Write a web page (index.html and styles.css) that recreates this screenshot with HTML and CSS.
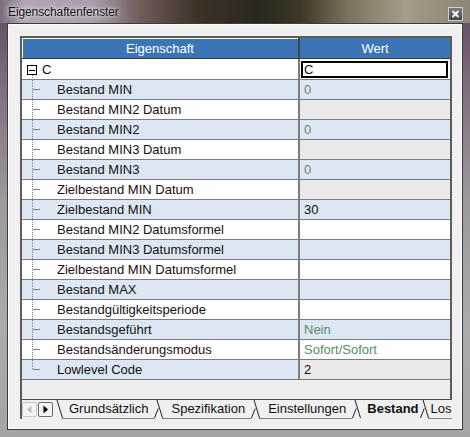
FILE: index.html
```html
<!DOCTYPE html>
<html lang="de">
<head>
<meta charset="utf-8">
<title>Eigenschaftenfenster</title>
<link rel="stylesheet" href="styles.css">
</head>
<body>
<div class="window">
  <div class="titlebar">
    <span class="title">Eigenschaftenfenster</span>
    <span class="close"><svg width="9" height="8" viewBox="0 0 9 8"><path d="M1.5 1 L7.5 7 M7.5 1 L1.5 7" stroke="#fff" stroke-width="1.8"/></svg></span>
  </div>
  <div class="client">
    <div class="panel">
      <div class="grid">
        <div class="header">
          <div class="hcell first">Eigenschaft</div>
          <div class="hcell">Wert</div>
        </div>

        <div class="row top">
          <div class="name"><svg class="tree-root" width="20" height="20" viewBox="0 0 20 20"><rect x="5.5" y="6.5" width="9" height="9" fill="#fff" stroke="#000"/><path d="M7 11 H13" stroke="#000"/><path d="M10.5 16 V20" stroke="#808080" stroke-dasharray="1 1"/></svg>C</div>
          <div class="val edit"><span class="box">C</span></div>
        </div>

        <div class="row alt">
          <div class="name"><svg class="tree" width="35" height="19" viewBox="0 0 35 19"><path d="M10.5 0 V19" stroke="#808080" stroke-dasharray="1 1"/><path d="M11 9.5 H18" stroke="#808080"/></svg>Bestand MIN</div>
          <div class="val green">0</div>
        </div>
        <div class="row">
          <div class="name"><svg class="tree" width="35" height="19" viewBox="0 0 35 19"><path d="M10.5 0 V19" stroke="#808080" stroke-dasharray="1 1"/><path d="M11 9.5 H18" stroke="#808080"/></svg>Bestand MIN2 Datum</div>
          <div class="val ro"></div>
        </div>
        <div class="row alt">
          <div class="name"><svg class="tree" width="35" height="19" viewBox="0 0 35 19"><path d="M10.5 0 V19" stroke="#808080" stroke-dasharray="1 1"/><path d="M11 9.5 H18" stroke="#808080"/></svg>Bestand MIN2</div>
          <div class="val green">0</div>
        </div>
        <div class="row">
          <div class="name"><svg class="tree" width="35" height="19" viewBox="0 0 35 19"><path d="M10.5 0 V19" stroke="#808080" stroke-dasharray="1 1"/><path d="M11 9.5 H18" stroke="#808080"/></svg>Bestand MIN3 Datum</div>
          <div class="val ro"></div>
        </div>
        <div class="row alt">
          <div class="name"><svg class="tree" width="35" height="19" viewBox="0 0 35 19"><path d="M10.5 0 V19" stroke="#808080" stroke-dasharray="1 1"/><path d="M11 9.5 H18" stroke="#808080"/></svg>Bestand MIN3</div>
          <div class="val green">0</div>
        </div>
        <div class="row">
          <div class="name"><svg class="tree" width="35" height="19" viewBox="0 0 35 19"><path d="M10.5 0 V19" stroke="#808080" stroke-dasharray="1 1"/><path d="M11 9.5 H18" stroke="#808080"/></svg>Zielbestand MIN Datum</div>
          <div class="val ro"></div>
        </div>
        <div class="row alt">
          <div class="name"><svg class="tree" width="35" height="19" viewBox="0 0 35 19"><path d="M10.5 0 V19" stroke="#808080" stroke-dasharray="1 1"/><path d="M11 9.5 H18" stroke="#808080"/></svg>Zielbestand MIN</div>
          <div class="val">30</div>
        </div>
        <div class="row">
          <div class="name"><svg class="tree" width="35" height="19" viewBox="0 0 35 19"><path d="M10.5 0 V19" stroke="#808080" stroke-dasharray="1 1"/><path d="M11 9.5 H18" stroke="#808080"/></svg>Bestand MIN2 Datumsformel</div>
          <div class="val"></div>
        </div>
        <div class="row alt">
          <div class="name"><svg class="tree" width="35" height="19" viewBox="0 0 35 19"><path d="M10.5 0 V19" stroke="#808080" stroke-dasharray="1 1"/><path d="M11 9.5 H18" stroke="#808080"/></svg>Bestand MIN3 Datumsformel</div>
          <div class="val"></div>
        </div>
        <div class="row">
          <div class="name"><svg class="tree" width="35" height="19" viewBox="0 0 35 19"><path d="M10.5 0 V19" stroke="#808080" stroke-dasharray="1 1"/><path d="M11 9.5 H18" stroke="#808080"/></svg>Zielbestand MIN Datumsformel</div>
          <div class="val"></div>
        </div>
        <div class="row alt">
          <div class="name"><svg class="tree" width="35" height="19" viewBox="0 0 35 19"><path d="M10.5 0 V19" stroke="#808080" stroke-dasharray="1 1"/><path d="M11 9.5 H18" stroke="#808080"/></svg>Bestand MAX</div>
          <div class="val"></div>
        </div>
        <div class="row">
          <div class="name"><svg class="tree" width="35" height="19" viewBox="0 0 35 19"><path d="M10.5 0 V19" stroke="#808080" stroke-dasharray="1 1"/><path d="M11 9.5 H18" stroke="#808080"/></svg>Bestandgültigkeitsperiode</div>
          <div class="val"></div>
        </div>
        <div class="row alt">
          <div class="name"><svg class="tree" width="35" height="19" viewBox="0 0 35 19"><path d="M10.5 0 V19" stroke="#808080" stroke-dasharray="1 1"/><path d="M11 9.5 H18" stroke="#808080"/></svg>Bestandsgeführt</div>
          <div class="val green">Nein</div>
        </div>
        <div class="row">
          <div class="name"><svg class="tree" width="35" height="19" viewBox="0 0 35 19"><path d="M10.5 0 V19" stroke="#808080" stroke-dasharray="1 1"/><path d="M11 9.5 H18" stroke="#808080"/></svg>Bestandsänderungsmodus</div>
          <div class="val green">Sofort/Sofort</div>
        </div>
        <div class="row alt">
          <div class="name"><svg class="tree" width="35" height="19" viewBox="0 0 35 19"><path d="M10.5 0 V10" stroke="#808080" stroke-dasharray="1 1"/><path d="M11 9.5 H18" stroke="#808080"/></svg>Lowlevel Code</div>
          <div class="val ro">2</div>
        </div>

        <div class="filler"></div>
      </div>

      <div class="tabs">
        <span class="sbtn off"><svg width="13" height="13" viewBox="0 0 13 13"><path d="M8.5 2.5 L4 6.5 L8.5 10.5 Z" fill="#c4c4c4"/></svg></span>
        <span class="sbtn on"><svg width="13" height="13" viewBox="0 0 13 13"><path d="M4.5 2.5 L9 6.5 L4.5 10.5 Z" fill="#000"/></svg></span>
        <svg class="sep" width="10" height="19" viewBox="0 0 10 19"><path d="M4 0 L9.5 18" stroke="#222" fill="none"/><path d="M9 18.5 H10" stroke="#808080"/></svg>
        <span class="tab">Grundsätzlich</span>
        <svg class="sep" width="14" height="19" viewBox="0 0 14 19"><path d="M6 0 L11.5 18" stroke="#222" fill="none"/><path d="M3.5 18 L7.2 8.5" stroke="#222" fill="none"/><path d="M0 18.5 H3.5 M11 18.5 H14" stroke="#808080"/></svg>
        <span class="tab">Spezifikation</span>
        <svg class="sep" width="14" height="19" viewBox="0 0 14 19"><path d="M6 0 L11.5 18" stroke="#222" fill="none"/><path d="M3.5 18 L7.2 8.5" stroke="#222" fill="none"/><path d="M0 18.5 H3.5 M11 18.5 H14" stroke="#808080"/></svg>
        <span class="tab">Einstellungen</span>
        <svg class="sep" width="14" height="19" viewBox="0 0 14 19"><path d="M6 0 L11.5 18" stroke="#222" fill="none"/><path d="M3.5 18 L7.2 8.5" stroke="#222" fill="none"/><path d="M0 18.5 H3.5" stroke="#808080"/></svg>
        <span class="tab active">Bestand</span>
        <svg class="sep last-sep" width="12" height="19" viewBox="0 0 12 19"><path d="M4 0 L9.5 18" stroke="#222" fill="none"/><path d="M1.5 18 L5.2 8.5" stroke="#222" fill="none"/><path d="M9 18.5 H12" stroke="#808080"/></svg>
        <span class="tab last">Los</span>
      </div>
    </div>
  </div>
</div>
</body>
</html>
```
FILE: styles.css
```css
html, body {
  margin: 0;
  padding: 0;
}
body {
  width: 470px;
  height: 437px;
  overflow: hidden;
  font-family: "Liberation Sans", Arial, sans-serif;
}
.window {
  height: 437px;
  display: flex;
  flex-direction: column;
  background: linear-gradient(180deg, #5e4a5e 0%, #7d6c7c 18%, #9c989c 45%, #ababab 75%, #a4a4a4 100%);
}
.titlebar {
  height: 23px;
  flex: 0 0 23px;
  display: flex;
  align-items: flex-start;
  background: linear-gradient(90deg, #7a6a7e 0%, #b2a4b4 5%, #aa9cab 20%, #6e5c5a 30%, #3c3326 42%, #2b271d 55%, #3e3726 64%, #7c735e 74%, #a49c88 86%, #8c8474 100%);
}
.title {
  margin: 5px 0 0 8px;
  font-size: 12px;
  letter-spacing: -0.1px;
  color: #141414;
  text-shadow: 0 0 6px rgba(255,255,255,0.85), 0 0 3px rgba(255,255,255,0.7);
}
.close {
  margin: 7px 7px 0 auto;
  width: 15px;
  height: 14px;
  box-sizing: border-box;
  border: 1px solid #cfcfcf;
  background: linear-gradient(180deg, #7a7a7a, #474747);
  display: flex;
  align-items: center;
  justify-content: center;
}
.client {
  margin: 0 7px;
  height: 407px;
  box-sizing: border-box;
  border: 1px solid #3c3c3c;
  box-shadow: inset 0 0 0 1px #fdfdfd;
  background: #f0f0f0;
  padding: 12px 10px 10px 12px;
}
.panel {
  border-left: 2px solid #5c5c5c;
  display: flex;
  flex-direction: column;
}
.grid {
  border-top: 2px solid #5c5c5c;
  border-right: 2px solid #5c5c5c;
  border-bottom: 1px solid #4a4a4a;
  background: #ededed;
}
.header {
  display: grid;
  grid-template-columns: 278px 150px;
  height: 21px;
  box-sizing: border-box;
  border-bottom: 1px solid #3a3a3a;
}
.hcell {
  background: #3b75b6;
  color: #fff;
  font-size: 13px;
  display: flex;
  align-items: center;
  justify-content: center;
}
.hcell.first {
  border-right: 2px solid #454545;
  box-shadow: inset 1px 1px 0 #ffffff;
}
.row {
  display: grid;
  grid-template-columns: 278px 150px;
  height: 20px;
  box-sizing: border-box;
  border-bottom: 1px solid #7c7c7c;
  font-size: 13px;
  color: #111;
}
.row.top {
  height: 21px;
}
.name {
  display: flex;
  align-items: center;
  border-right: 2px solid #7c7c7c;
  background: #fff;
  white-space: nowrap;
}
.tree, .tree-root {
  flex: 0 0 auto;
  display: block;
  align-self: stretch;
  shape-rendering: crispEdges;
}
.val {
  display: flex;
  align-items: center;
  padding-left: 4px;
  background: #fff;
}
.row.alt .name,
.row.alt .val {
  background: #dce7f3;
}
.row .val.ro {
  background: #e9e9e9;
}
.val.green {
  color: #5a8b6a;
}
.val.edit {
  padding: 2px 2px 1px 1px;
  align-items: stretch;
}
.box {
  flex: 1;
  border: 2px solid #000;
  background: #fff;
  padding-left: 1px;
  display: flex;
  align-items: center;
  line-height: 13px;
}
.filler {
  height: 19px;
}
.tabs {
  height: 19px;
  display: flex;
  align-items: flex-start;
  overflow: hidden;
  font-size: 13px;
  color: #111;
  white-space: nowrap;
}
.sbtn {
  flex: 0 0 auto;
  width: 15px;
  height: 15px;
  margin-top: 2px;
  box-sizing: border-box;
  border: 1px solid #c8c8c8;
  border-radius: 2px;
  background: #f4f4f4;
  display: flex;
  align-items: center;
  justify-content: center;
}
.sbtn.on {
  margin-left: 1px;
  border-color: #6a6a6a;
}
.sep {
  flex: 0 0 auto;
  display: block;
}
.tab {
  flex: 0 0 auto;
  height: 19px;
  box-sizing: border-box;
  line-height: 18px;
  padding: 0 3px 0 6px;
  border-bottom: 1px solid #808080;
}
.tab.active {
  font-weight: bold;
  padding: 0 0 0 4px;
  border-bottom-color: transparent;
}
.tab.last {
  padding: 0;
}
```
